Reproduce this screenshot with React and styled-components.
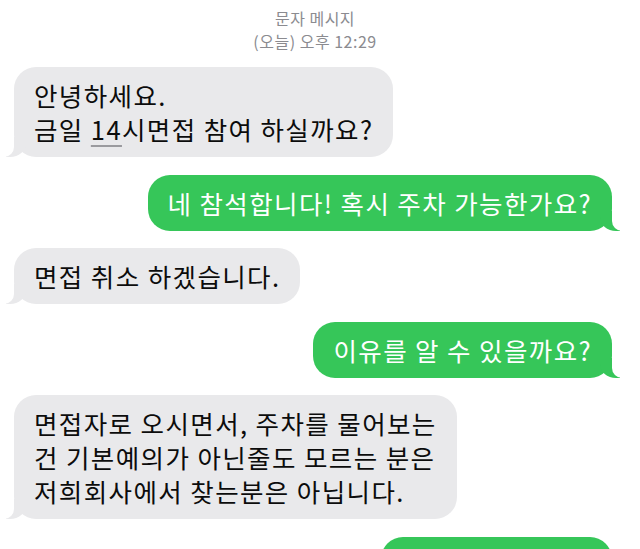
import React from "react";
import styled, { createGlobalStyle, css } from "styled-components";

const GlobalStyle = createGlobalStyle`
  html, body {
    margin: 0;
    padding: 0;
    background: #ffffff;
    overflow: hidden;
  }
  body {
    font-family: "Noto Sans CJK KR", "Noto Sans", sans-serif;
  }
`;

const messages = [
  { id: 1, from: "them", lines: ["안녕하세요.", "금일 |14|시면접 참여 하실까요?"] },
  { id: 2, from: "me", lines: ["네 참석합니다! 혹시 주차 가능한가요?"] },
  { id: 3, from: "them", lines: ["면접 취소 하겠습니다."] },
  { id: 4, from: "me", lines: ["이유를 알 수 있을까요?"] },
  {
    id: 5,
    from: "them",
    lines: [
      "면접자로 오시면서, 주차를 물어보는",
      "건 기본예의가 아닌줄도 모르는 분은",
      "저희회사에서 찾는분은 아닙니다.",
    ],
  },
  { id: 6, from: "me", lines: ["그럼 알겠습니다!"] },
];

// "14" is wrapped in pipes so it gets the data-detector underline
const renderLine = (line) =>
  line.split("|").map((part, i) =>
    i % 2 === 1 ? <Detected key={i}>{part}</Detected> : <span key={i}>{part}</span>
  );

export default function App() {
  return (
    <>
      <GlobalStyle />
      <Screen>
        <Header>
          <HeaderTitle>문자 메시지</HeaderTitle>
          <HeaderTime>(오늘) 오후 12:29</HeaderTime>
        </Header>
        <Thread>
          {messages.map((m) => (
            <Bubble key={m.id} $mine={m.from === "me"}>
              {m.lines.map((line, i) => (
                <React.Fragment key={i}>
                  {i > 0 && <br />}
                  {renderLine(line)}
                </React.Fragment>
              ))}
            </Bubble>
          ))}
        </Thread>
      </Screen>
    </>
  );
}

const Screen = styled.div`
  width: 640px;
  height: 549px;
  overflow: hidden;
  display: flex;
  flex-direction: column;
`;

const Header = styled.div`
  display: flex;
  flex-direction: column;
  align-items: center;
  padding-top: 7px;
  padding-right: 10px;
  color: #8b8b90;
  font-size: 16px;
  line-height: 23px;
  letter-spacing: 0.5px;
`;

const HeaderTitle = styled.div``;

const HeaderTime = styled.div``;

const Thread = styled.div`
  display: flex;
  flex-direction: column;
  gap: 17.5px;
  padding: 14px 28px 0 14px;
`;

const Detected = styled.span`
  text-decoration: underline;
  text-decoration-color: #9a9a9e;
  text-decoration-thickness: 1.5px;
  text-underline-offset: 5px;
`;

const grey = "#e9e9eb";
const green = "#36c659";

const Bubble = styled.div`
  position: relative;
  align-self: ${(p) => (p.$mine ? "flex-end" : "flex-start")};
  padding: 11px 20px;
  border-radius: 22px;
  font-size: 25.5px;
  line-height: 34px;
  letter-spacing: 1.4px;
  white-space: nowrap;
  background: ${(p) => (p.$mine ? green : grey)};
  color: ${(p) => (p.$mine ? "#ffffff" : "#0c0c0c")};

  &::before,
  &::after {
    content: "";
    position: absolute;
    bottom: 0;
    height: 20px;
  }

  ${(p) =>
    p.$mine
      ? css`
          &::before {
            right: -8px;
            width: 20px;
            background: ${green};
            border-bottom-left-radius: 16px 14px;
          }
          &::after {
            right: -10px;
            width: 10px;
            background: #ffffff;
            border-bottom-left-radius: 10px;
          }
        `
      : css`
          &::before {
            left: -8px;
            width: 20px;
            background: ${grey};
            border-bottom-right-radius: 16px 14px;
          }
          &::after {
            left: -10px;
            width: 10px;
            background: #ffffff;
            border-bottom-right-radius: 10px;
          }
        `}
`;
